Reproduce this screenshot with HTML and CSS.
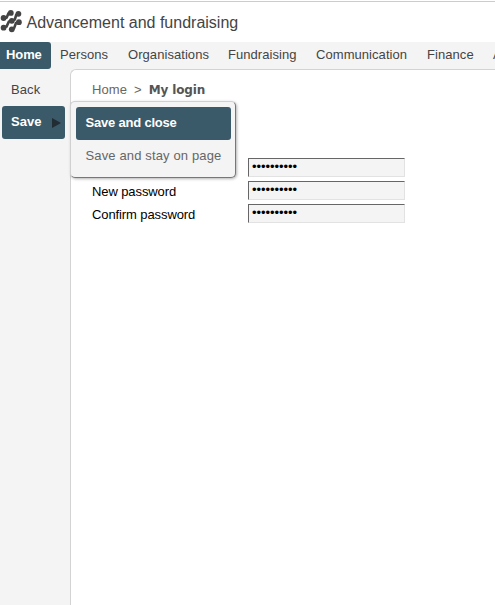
FILE: index.html
```
<!DOCTYPE html>
<html lang="en">
<head>
<meta charset="utf-8">
<title>My login</title>
<link rel="stylesheet" href="styles.css">
</head>
<body>
<header class="header">
  <svg class="logo" width="22" height="24" viewBox="0 0 22 24">
    <g fill="none" stroke="#444" stroke-width="2.6" stroke-linejoin="round">
      <path d="M3.4 8.8H6.6L8.4 4.4H11M3.6 18.5L6.5 17.6L9 12.4L12 11.6L14.8 10.6L16.2 6L18.6 4.8M11.6 20.3L14 19.4L16 14L18.8 13.2"/>
    </g>
    <g fill="#444">
      <circle cx="10.8" cy="3.9" r="2.9"/><circle cx="18.4" cy="4.8" r="2.9"/>
      <circle cx="3.6" cy="9" r="2.9"/><circle cx="11.8" cy="11.8" r="2.9"/>
      <circle cx="18.9" cy="13.2" r="2.9"/><circle cx="3.6" cy="18.7" r="2.9"/>
      <circle cx="11.8" cy="20.3" r="2.9"/>
    </g>
  </svg>
  <span class="brand">Advancement and fundraising</span>
</header>
<nav class="nav">
  <a class="tab active">Home</a><a class="tab">Persons</a><a class="tab">Organisations</a><a class="tab">Fundraising</a><a class="tab">Communication</a><a class="tab">Finance</a><a class="tab">A</a>
</nav>
<div class="body">
  <aside class="side">
    <a class="back">Back</a>
    <div class="save"><span>Save</span><i class="arrow"></i></div>
  </aside>
  <main class="content">
    <div class="crumbs"><span>Home</span><span class="sep">&gt;</span><b>My login</b></div>
    <form class="form">
      <span></span><input type="password" value="password12">
      <label for="p2">New password</label><input id="p2" type="password" value="password12">
      <label for="p3">Confirm password</label><input id="p3" type="password" value="password12">
    </form>
    <div class="menu">
      <a class="item selected">Save and close</a>
      <a class="item">Save and stay on page</a>
    </div>
  </main>
</div>
</body>
</html>
```
FILE: styles.css
```
* { box-sizing: border-box; }
body {
  margin: 0;
  height: 605px;
  display: flex;
  flex-direction: column;
  overflow: hidden;
  background: #fff;
  font-family: "Liberation Sans", Arial, sans-serif;
  font-size: 13px;
  color: #444;
}
.header {
  height: 41px;
  margin-top: 1px;
  border-top: 1px solid #ccc;
  display: flex;
  align-items: flex-start;
  flex: none;
}
.logo { margin-top: 7px; flex: none; }
.brand { font-size: 16px; line-height: 20px; margin: 11px 0 0 4.5px; }
.nav {
  height: 27px;
  flex: none;
  display: grid;
  grid-template-columns: 51px 68px 100px 88px 111px 66px 11px;
  overflow: hidden;
  background: #f4f4f4;
  white-space: nowrap;
}
.tab { line-height: 26px; padding-left: 9px; letter-spacing: 0.06px; overflow: hidden; }
.active {
  padding-left: 6px;
  background: #3a5a6a;
  color: #fff;
  font-weight: bold;
  letter-spacing: -0.1px;
  border-radius: 0 3px 3px 0;
}
.body { flex: 1; display: flex; background: #f4f4f4; }
.side { width: 70px; padding: 11px 5px 0 2px; flex: none; }
.back { display: block; line-height: 20px; padding-left: 9px; letter-spacing: 0.1px; }
.save {
  margin-top: 6px;
  height: 33px;
  padding: 0 4px 2px 9px;
  border-radius: 3px;
  background: #3a5a6a;
  color: #fff;
  font-weight: bold;
  display: flex;
  align-items: center;
  justify-content: space-between;
}
.arrow {
  margin-top: 3px;
  border-left: 9px solid #222c33;
  border-top: 5px solid transparent;
  border-bottom: 5px solid transparent;
}
.content {
  position: relative;
  flex: 1;
  background: #fff;
  border-top: 1px solid #d3d3d3;
  border-left: 1px solid #d3d3d3;
  border-top-left-radius: 6px;
  padding-left: 21px;
}
.crumbs {
  padding-top: 10px;
  line-height: 20px;
  letter-spacing: 0.1px;
  color: #666;
}
.crumbs b { font-family: "DejaVu Sans", Verdana, sans-serif; font-size: 12px; color: #555; letter-spacing: -0.15px; }
.sep { margin: 0 7px; }
.form {
  margin-top: 58px;
  display: grid;
  grid-template-columns: 156px 157px;
  grid-auto-rows: 19px;
  row-gap: 4px;
  letter-spacing: -0.1px;
  color: #000;
}
.form label { line-height: 21px; }
.form input {
  width: 157px;
  height: 19px;
  margin: 0;
  padding: 0 3px 2px;
  background: #f4f4f4;
  border: 1px solid #e2e2e2;
  border-top-color: #666;
  border-left-color: #666;
  font-family: "Liberation Sans", Arial, sans-serif;
  font-size: 13px;
  letter-spacing: -0.05px;
  color: #000;
  outline: 0;
}
.menu {
  position: absolute;
  left: -1px;
  top: 31px;
  width: 166px;
  height: 77px;
  padding: 5px 4px 0 5px;
  background: #f4f4f4;
  border: 1px solid #d0d0d0;
  border-right-color: #777;
  border-bottom-color: #777;
  border-radius: 5px;
  box-shadow: 1px 1px 3px rgba(0, 0, 0, .3);
}
.item { display: block; height: 33px; line-height: 31px; padding-left: 9.5px; border-radius: 3px; letter-spacing: 0.14px; color: #666; white-space: nowrap; }
.selected { background: #3a5a6a; color: #fff; font-weight: bold; letter-spacing: -0.2px; }
```
